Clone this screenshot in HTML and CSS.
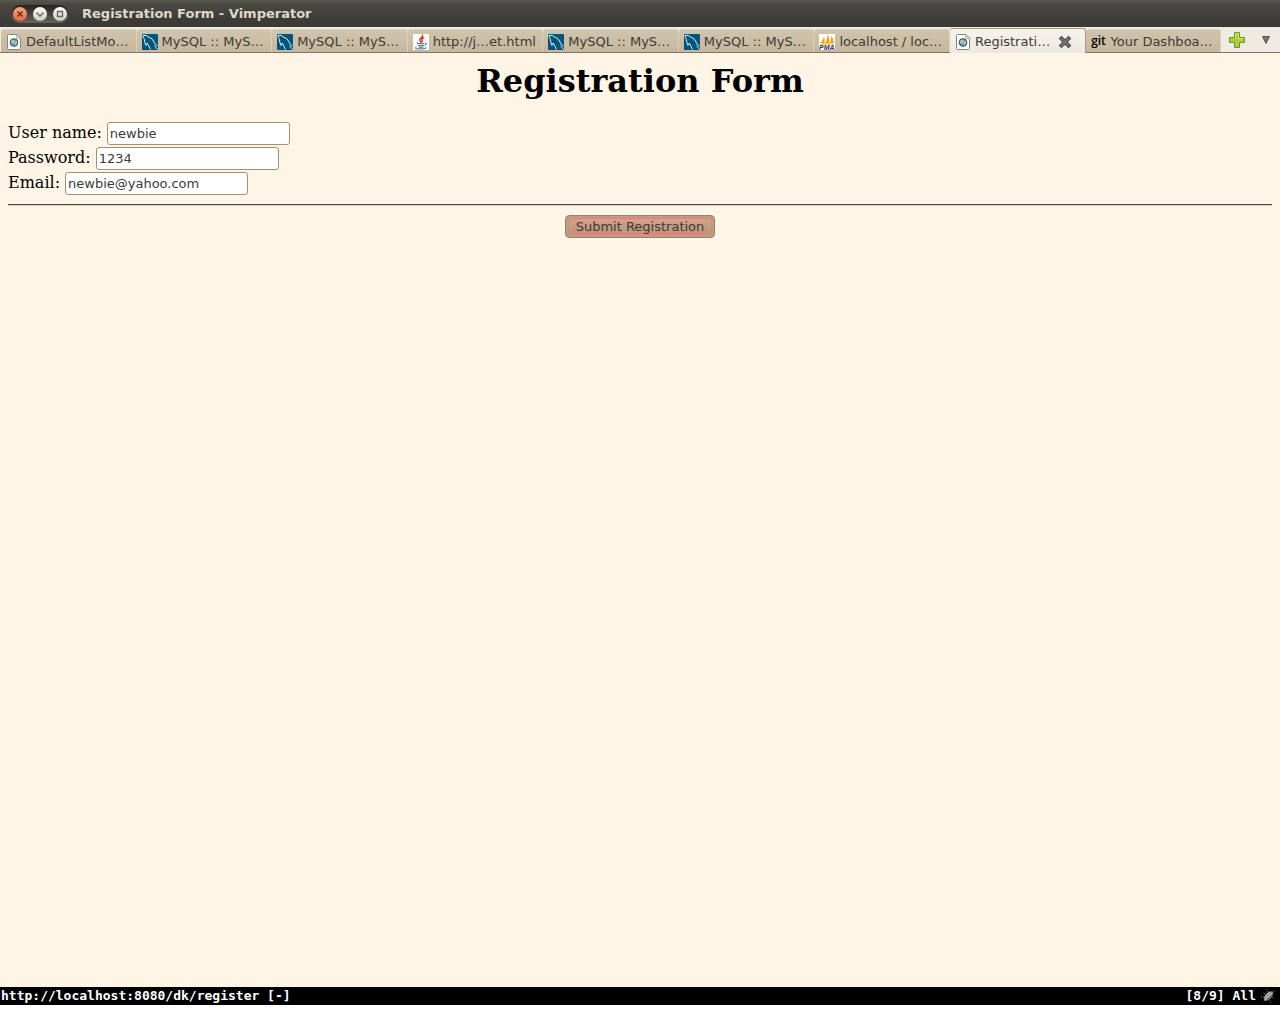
FILE: index.html
```html
<!DOCTYPE html>
<html lang="en">
<head>
<meta charset="utf-8">
<meta name="viewport" content="width=device-width, initial-scale=1">
<title>Registration Form - Vimperator</title>
<link rel="stylesheet" href="styles.css">
</head>
<body>
<svg class="symbols" aria-hidden="true">
  <symbol id="page" viewBox="0 0 16 16">
    <path d="M1.5 1.5Q1.5.5 2.5.5H11L14.500 4V14.500Q14.500 15.500 13.500 15.500H2.500Q1.500 15.500 1.500 14.500Z" fill="#fbfbf9" stroke="#85877f"/>
    <path d="M10.500 1L14 4.500H10.500Z" fill="#d4d5d0" stroke="#a5a79f" stroke-width=".6"/>
    <circle cx="8" cy="8.500" r="3.800" fill="#6a9dcf" stroke="#204a87" stroke-width="1"/>
    <path d="M5.500 6.500L8 5.500L8.500 8L7 9.500L5 8.500ZM9 8L11 7L11.200 9L9.500 11L8.500 10Z" fill="#c9d45c"/>
  </symbol>
  <symbol id="mysql" viewBox="0 0 16 16">
    <rect width="16" height="16" rx="1" fill="#00557f"/>
    <path d="M1 1.500Q4.500.5 6.500 3Q10.500 4 12 8Q12.500 10 14.500 11L15.500 12M12.500 11.500L15.500 15.500M1 1.500Q1 3.500 2.500 5.500Q2.500 9 4 11.500Q5 10.500 5 9Q6.500 10.500 7 12.500L8.500 15.500" fill="none" stroke="#e5f1f7" stroke-width="1"/>
  </symbol>
  <symbol id="java" viewBox="0 0 16 16">
    <rect width="16" height="16" fill="#fff"/>
    <path d="M9.500.5Q10 2.500 8 3.800Q5.500 5.500 8 8.500M11 3.500Q7.500 5 9 6.500Q9.800 7.500 8.500 8.800" fill="none" stroke="#e5391d" stroke-width="1.400"/>
    <path d="M5 8.500Q3 9.500 5 9.700H11M12 9Q14.500 9 12.500 11L11.500 11.500M5.200 11.400Q7.500 12 10.800 11.400M5.500 13Q8 13.600 10.500 13M3.500 13Q.5 14.500 5 14.900Q10 15.500 13.500 13.800" fill="none" stroke="#396580" stroke-width="1"/>
  </symbol>
</svg>

<header class="titlebar">
  <div class="window-controls">
    <button class="control control-close" aria-label="Close"><svg viewBox="0 0 14 14"><path d="M4.500 4.500L9.500 9.500M9.500 4.500L4.500 9.500"/></svg></button>
    <button class="control" aria-label="Minimize"><svg viewBox="0 0 14 14"><path d="M3.500 5.500L7 9L10.500 5.500"/></svg></button>
    <button class="control" aria-label="Maximize"><svg viewBox="0 0 14 14"><path d="M4.500 4.500H9.500V9.500H4.500Z"/></svg></button>
  </div>
  <span class="window-title">Registration Form - Vimperator</span>
</header>

<nav class="tabbar" aria-label="Tabs">
  <div class="tab"><button class="tab-label"><svg class="favicon"><use href="#page"/></svg>DefaultListMo…</button></div>
  <div class="tab"><button class="tab-label"><svg class="favicon"><use href="#mysql"/></svg>MySQL :: MyS…</button></div>
  <div class="tab"><button class="tab-label"><svg class="favicon"><use href="#mysql"/></svg>MySQL :: MyS…</button></div>
  <div class="tab"><button class="tab-label"><svg class="favicon"><use href="#java"/></svg>http://j…et.html</button></div>
  <div class="tab"><button class="tab-label"><svg class="favicon"><use href="#mysql"/></svg>MySQL :: MyS…</button></div>
  <div class="tab"><button class="tab-label"><svg class="favicon"><use href="#mysql"/></svg>MySQL :: MyS…</button></div>
  <div class="tab"><button class="tab-label"><svg class="favicon" viewBox="0 0 16 16">
    <rect width="16" height="16" fill="#fff"/>
    <path d="M1.500 9Q4 7 5 2Q6 6 5.500 9ZM6 9Q8.500 6 8.500 0Q11 5 10 9ZM10.500 9Q12.500 7 12 2Q15 5 14.500 9ZM1 9.500H15L14 10.500H2Z" fill="#f89c0e"/>
    <text class="pma-text" x="0" y="16">PMA</text>
  </svg>localhost / loc…</button></div>
  <div class="tab tab-active"><button class="tab-label"><svg class="favicon"><use href="#page"/></svg>Registrati…</button><button class="tab-close" aria-label="Close tab"><svg viewBox="0 0 14 14"><path d="M3.500 3.500L10.500 10.500M10.500 3.500L3.500 10.500" stroke="#4c4c4a" stroke-width="4" stroke-linecap="square"/><path d="M3.500 3.500L10.500 10.500M10.500 3.500L3.500 10.500" stroke="#747472" stroke-width="2" stroke-linecap="square"/></svg></button></div>
  <div class="tab"><button class="tab-label"><span class="favicon git">git</span>Your Dashboa…</button></div>
  <div class="tab-tools">
    <button class="tool" aria-label="New tab"><svg width="16" height="16" viewBox="0 0 16 16"><path d="M5.500.5H10.500V5.500H15.500V10.500H10.500V15.500H5.500V10.500H.5V5.500H5.500Z" fill="#b4cc3a" stroke="#5f9a22"/><path d="M6.500 6.500V1.500H9.500V6.500H14.500" fill="none" stroke="#dbe67a"/></svg></button>
    <button class="tool" aria-label="List all tabs"><svg width="8" height="8" viewBox="0 0 8 8"><path d="M.5.5H7.500L4 7.500Z" fill="#777" stroke="#555"/></svg></button>
  </div>
</nav>

<main class="page">
  <h1>Registration Form</h1>
  <form>
    <div class="row"><label for="username">User name:</label><input id="username" type="text" value="newbie"></div>
    <div class="row"><label for="password">Password:</label><input id="password" type="text" value="1234"></div>
    <div class="row"><label for="email">Email:</label><input id="email" type="text" value="newbie@yahoo.com"></div>
    <hr>
    <div class="actions"><button class="submit" type="submit">Submit Registration</button></div>
  </form>
</main>

<footer class="statusbar">
  <span>http://localhost:8080/dk/register [-]</span>
  <span class="status-right">[8/9] All
    <svg class="bug" width="16" height="16" viewBox="0 0 16 16"><path d="M5 6L2.500 4M4 9H1M5 12L3 14.500M8 4L7 1M12 9L14.500 11M10 12L11 15M13 4L15 2" stroke="#777" stroke-dasharray="1 1"/><ellipse cx="8.500" cy="8" rx="6" ry="3.200" transform="rotate(-45 8.500 8)" fill="#858585"/><path d="M5 12L12 5M4.500 9.500L10 4" stroke="#d8d8d8"/><path d="M7 12L13 6" stroke="#555"/></svg>
  </span>
</footer>
</body>
</html>
```
FILE: styles.css
```css
* {
  box-sizing: border-box;
}

body {
  margin: 0;
  min-height: 100vh;
  padding-bottom: 19px;
  display: flex;
  flex-direction: column;
  background: #fff;
  font: 13px/18px "DejaVu Sans", sans-serif;
  color: #3c3b37;
}

button,
input {
  font: inherit;
  color: inherit;
}

button {
  padding: 0;
  border: 0;
  background: none;
}

.symbols {
  display: none;
}

.titlebar {
  display: flex;
  align-items: center;
  gap: 13px;
  height: 27px;
  padding: 1px 11px 0;
  background: linear-gradient(#5d594e, #4b4a44 3px, #3c3b37 20px, #3a3935);
}

.window-controls {
  display: flex;
  align-items: center;
  gap: 6px;
  height: 18px;
  padding: 0 2px;
  border-radius: 9px;
  background: linear-gradient(#24231f, #65645e);
}

.control {
  width: 14px;
  height: 14px;
  border-radius: 50%;
  background: linear-gradient(#fffefb, #cfcbc2);
}

.control svg {
  display: block;
  fill: none;
  stroke: #68665f;
  stroke-width: 1.4;
}

.control-close {
  background: linear-gradient(#f9a283, #e9673a);
}

.control-close svg {
  stroke: #5b2c1b;
}

.window-title {
  color: #dfd8c8;
  font-weight: bold;
}

.tabbar {
  display: flex;
  height: 26px;
  padding: 1px 0 0 1px;
  background: #f0ebe2;
  border-bottom: 1px solid #85755f;
}

.tab {
  flex: 1 1 0;
  min-width: 0;
  display: flex;
  align-items: center;
  margin-top: 1px;
  padding: 2px 5px 0;
  border: solid #dcd0bb;
  border-width: 1px 1px 0 0;
  border-radius: 3px 3px 0 0;
  background: linear-gradient(#d0c4ac, #c6b89e);
}

.tab-active {
  margin: 0 0 -1px;
  padding-top: 1px;
  border-color: #a89c87;
  background: linear-gradient(#f6f3ed, #eee8df);
}

.tab-label {
  display: flex;
  align-items: center;
  gap: 4px;
  white-space: nowrap;
}

.favicon {
  flex: none;
  width: 16px;
  height: 16px;
}

.pma-text {
  font: italic bold 7px "Liberation Sans", sans-serif;
  fill: #27306b;
}

.git {
  color: #000;
  font: 600 12px/14px "Open Sans", sans-serif;
}

.tab-close {
  width: 14px;
  height: 14px;
  margin-left: 8px;
}

.tab-close svg {
  display: block;
}

.tab-tools {
  display: flex;
  align-items: center;
  gap: 17px;
  width: 59px;
  padding-left: 8px;
}

.tool svg {
  display: block;
}

.page {
  flex: 1;
  padding: 9px 8px 8px;
  background: #fef5e6;
  color: #000;
  font: 16px/19px "DejaVu Serif", serif;
}

h1 {
  margin: 0 0 21px;
  font-size: 32px;
  line-height: 38px;
  text-align: center;
}

.row {
  display: flex;
  align-items: center;
  gap: 5px;
  height: 25px;
}

.row label {
  padding-bottom: 2px;
}

.row input {
  width: 183px;
  height: 23px;
  padding: 0 2px;
  border: 1px solid #a09076;
  border-radius: 3px;
  background: #fff;
  color: #3c3b37;
  font: 13px "DejaVu Sans", sans-serif;
}

hr {
  margin: 8px 0 9px;
  border: solid #4a4845;
  border-width: 1px 0 0;
  border-bottom: 1px solid #d8d0c4;
}

.actions {
  text-align: center;
}

.submit {
  width: 150px;
  height: 23px;
  border: 1px solid #908670;
  border-radius: 4px;
  background: linear-gradient(#d2a892, #bd8e76);
  box-shadow: inset 0 0 0 2px #b5a18a, inset 0 0 0 3px #ee8063;
  color: #3c3b37;
  font: 13px/20px "DejaVu Sans", sans-serif;
}

.statusbar {
  display: flex;
  justify-content: space-between;
  height: 18px;
  padding: 0 4px 0 1px;
  background: #000;
  color: #fff;
  font: bold 13px/18px "DejaVu Sans Mono", monospace;
}

.status-right {
  display: flex;
  align-items: center;
  gap: 4px;
}
```
